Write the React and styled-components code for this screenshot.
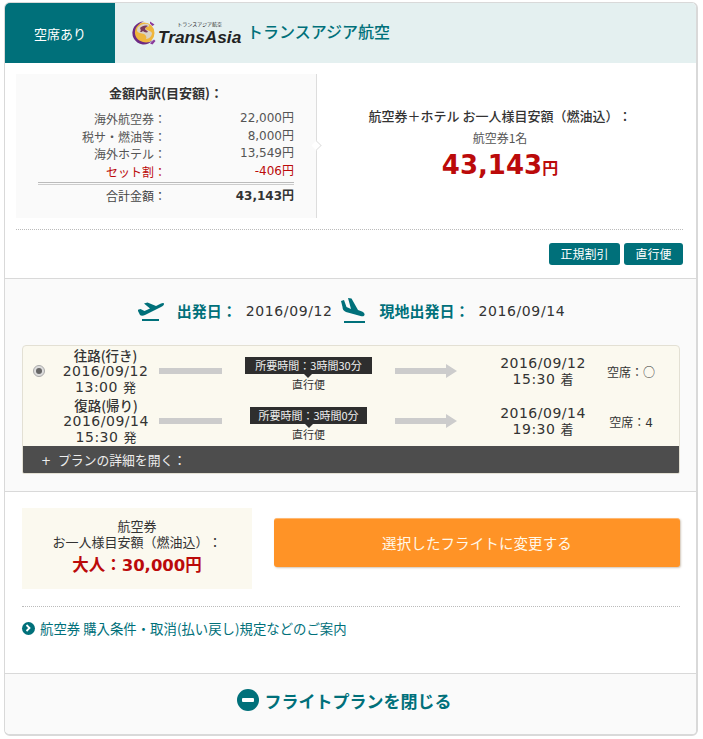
import React from "react";
import styled, { createGlobalStyle } from "styled-components";

const Global = createGlobalStyle`
  html, body { margin: 0; padding: 0; background: #fff; }
  body { font-family: "DejaVu Sans", "Noto Sans CJK JP", sans-serif; color: #333; font-size: 12px; text-spacing-trim: space-all; }
`;
const JP = `"Noto Sans CJK JP", "DejaVu Sans", sans-serif`;
const TEAL = "#00707a";
const RED = "#bb0a0a";

const Page = styled.div`
  width: 703px; height: 739px; padding: 2px 5px 0 4px; box-sizing: border-box; overflow: hidden;
`;
const Card = styled.div`
  width: 694px; height: 734px; box-sizing: border-box; border: 1px solid #d9d9d9; border-width: 1px 2px 2px 1px;
  border-radius: 6px; background: #fff; display: flex; flex-direction: column; overflow: hidden;
`;
const Header = styled.div`
  height: 60px; flex: none; display: flex; align-items: center; background: #e4f0f0;
`;
const StatusTab = styled.div`
  width: 110px; align-self: stretch; background: ${TEAL}; color: #fff; font: 400 13px ${JP};
  display: flex; align-items: center; justify-content: center;
`;
const Logo = styled.div`
  display: flex; align-items: center; margin-left: 16px; width: 116px; flex: none;
`;
const LogoWords = styled.div`
  display: flex; flex-direction: column; align-items: center; margin-left: 1px;
`;
const LogoSmall = styled.span`
  font: 400 5px/8px ${JP}; color: #222; margin-bottom: -1px;
`;
const LogoName = styled.span`
  font: italic 700 17.300px/20px "Liberation Sans", sans-serif; color: #222;
`;
const Airline = styled.div`
  font: 500 16px ${JP}; color: ${TEAL}; margin-top: -4px;
`;

const Summary = styled.div`
  flex: none; height: 215px; margin: 0 13px 0 11px; display: flex; flex-direction: column; padding-top: 11px; box-sizing: border-box;
`;
const SummaryTop = styled.div`
  display: flex; height: 144px; flex: none;
`;
const Breakdown = styled.div`
  width: 301px; box-sizing: border-box; background: #fafafa; border-right: 1px solid #ddd; position: relative;
  padding: 10px 22px 0 22px; color: #444;
  &::after {
    content: ""; position: absolute; right: -5px; top: 67px; width: 8px; height: 8px; background: #fff;
    border-top: 1px solid #ddd; border-right: 1px solid #ddd; transform: rotate(45deg) scale(.8,.8);
  }
`;
const BreakdownTitle = styled.div`
  font: 700 13px/18px ${JP}; color: #333; text-align: center; margin-bottom: 8px;
`;
const BreakRow = styled.div`
  display: flex; justify-content: flex-end; font: 400 12px/17.500px ${JP}; color: ${p => (p.$red ? RED : "#555")};
  & > span:first-child { width: 128px; text-align: right; white-space: nowrap; }
  & > span:last-child { width: 128px; text-align: right; font-family: "DejaVu Sans", "Noto Sans CJK JP", sans-serif; font-size: 12px; }
`;
const DoubleRule = styled.div`
  height: 1px; border-top: 1px solid #bbb; border-bottom: 1px solid #ccc; margin: 2px 0 1px 0;
`;
const TotalRow = styled(BreakRow)`
  color: #444; line-height: 20px;
  & > span:last-child { font-weight: 700; color: #333; }
`;
const Total = styled.div`
  flex: 1; display: flex; flex-direction: column; align-items: center; padding-top: 33px; box-sizing: border-box;
`;
const TotalTitle = styled.div`
  font: 500 13px/18px ${JP}; color: #333; white-space: nowrap;
`;
const TotalSub = styled.div`
  font: 400 12px/18px ${JP}; color: #555; margin-top: 4px;
`;
const TotalPrice = styled.div`
  font: 700 26px/32px "DejaVu Sans", sans-serif; color: ${RED}; margin-top: 2px;
  & > small { font: 700 16px ${JP}; }
`;
const Dotted = styled.div`
  border-top: 1px dotted #bbb; flex: none;
`;
const SummaryDotted = styled(Dotted)`
  margin-top: 11px;
`;
const Tags = styled.div`
  display: flex; justify-content: flex-end; gap: 4px; margin-top: 13px;
`;
const Tag = styled.span`
  height: 22px; padding: 0 11.500px; background: ${TEAL}; color: #fff; border-radius: 3px; font: 400 12px/22px ${JP};
  box-sizing: border-box;
`;

const Schedule = styled.div`
  flex: none; height: 214px; box-sizing: border-box; background: #fafafa; border-top: 1px solid #d9d9d9; border-bottom: 1px solid #d9d9d9;
  padding: 0 17px;
`;
const Dates = styled.div`
  height: 63px; margin-bottom: 3px; display: flex; align-items: center; justify-content: center; padding-left: 2px;
`;
const DateIcon = styled.svg`
  flex: none; margin-right: ${p => p.$mr}px;
`;
const DateLabel = styled.span`
  font: 700 15px ${JP}; color: ${TEAL}; margin-right: 9px; white-space: nowrap;
`;
const DateValue = styled.span`
  font: 400 14px "DejaVu Sans", sans-serif; letter-spacing: 0.600px; color: #333; margin-right: ${p => p.$mr || 0}px;
`;
const FlightBox = styled.div`
  border: 1px solid #e3e0d4; border-radius: 4px 4px 2px 2px; background: #fbf9ef; overflow: hidden; width: 658px; box-sizing: border-box;
`;
const FlightRow = styled.div`
  display: grid; height: 50px; grid-template-columns: 31px 103px 65px 173px 62px 139px 70px; align-items: center;
`;
const RadioCell = styled.div`
  display: flex; justify-content: center;
`;
const Radio = styled.span`
  width: 12px; height: 12px; border-radius: 50%; border: 1px solid #aaa; background: #ddd; box-sizing: border-box;
  display: flex; align-items: center; justify-content: center;
  &::after { content: ""; width: 6px; height: 6px; border-radius: 50%; background: #666; }
`;
const TimeCell = styled.div`
  text-align: center; font: 400 14px/16px "DejaVu Sans", "Noto Sans CJK JP", sans-serif; letter-spacing: 0.500px; color: #333; white-space: nowrap;
  padding-left: ${p => p.$pl || 0}px;
  & > b { display: block; font: 500 13.500px/16px ${JP}; letter-spacing: 0; }
  & > i { font: 400 13px/16px ${JP}; letter-spacing: 0; }
`;
const Bar = styled.div`
  height: 6px; width: 63px; background: #ccc; margin-left: 2px;
`;
const MidCell = styled.div`
  display: flex; flex-direction: column; align-items: center; margin-top: 7px;
`;
const DurationTag = styled.div`
  background: #2e2e2e; color: #eee; font: 400 11px/17px ${JP}; padding: 0 ${p => p.$pad}px; position: relative; white-space: nowrap;
  &::after {
    content: ""; position: absolute; left: 50%; bottom: -4px; margin-left: -4px; border: 4px solid transparent; border-bottom: 0; border-top-color: #2e2e2e;
  }
`;
const Direct = styled.div`
  font: 400 11px/18px ${JP}; color: #333; margin-top: 1px;
`;
const Arrow = styled.svg`
  display: block;
`;
const Seat = styled.div`
  text-align: center; font: 400 12px ${JP}; color: #333;
`;
const SeatMark = styled.span`
  font-family: ${p => (p.$latin ? `"DejaVu Sans", sans-serif` : JP)};
`;
const DetailBar = styled.div`
  height: 27px; background: #4d4d4d; color: #eee; font: 400 12.800px/27px ${JP}; padding-left: 18px;
  & > span { margin-right: 7px; font-family: "DejaVu Sans", sans-serif; font-size: 12px; }
`;

const Purchase = styled.div`
  flex: 1; padding: 16px 17px 0; display: flex; flex-direction: column;
`;
const PurchaseTop = styled.div`
  display: flex; align-items: flex-start; height: 81px; flex: none;
`;
const FareBox = styled.div`
  width: 230px; height: 81px; background: #fbf9ef; text-align: center; box-sizing: border-box; padding-top: 10px;
  font: 400 13px/16px ${JP}; color: #333; flex: none;
`;
const FarePrice = styled.div`
  font: 700 16.500px/22px "DejaVu Sans", "Noto Sans CJK JP", sans-serif; color: ${RED}; margin-top: 5px;
`;
const ChangeButton = styled.button`
  flex: none; width: 406px; height: 49px; margin: 10px 0 0 22px; border: 0; border-radius: 3px; background: #ff9326; color: #fff8ea;
  border-top: 1px solid #ffb871; box-shadow: 1px 1px 2px rgba(120,90,50,.35); font: 400 14.500px ${JP}; padding: 0 0 2px; letter-spacing: 0.100px;
`;
const PurchaseDotted = styled(Dotted)`
  margin-top: 17px; width: 658px;
`;
const InfoLink = styled.div`
  display: flex; align-items: center; gap: 5px; color: ${TEAL}; font: 400 13.400px/18px ${JP}; margin-top: 12px; white-space: nowrap;
`;
const LinkDot = styled.span`
  width: 13px; height: 13px; border-radius: 50%; background: ${TEAL}; display: flex; align-items: center; justify-content: center; flex: none;
`;
const Close = styled.div`
  flex: none; height: 61px; background: #fafafa; border-top: 1px solid #d9d9d9; display: flex; align-items: center; justify-content: center; gap: 6px;
  font: 700 17px ${JP}; color: ${TEAL}; padding-bottom: 8px; box-sizing: border-box; padding-right: 13px;
`;
const MinusDot = styled.span`
  width: 22px; height: 22px; border-radius: 50%; background: ${TEAL}; display: flex; align-items: center; justify-content: center;
  &::after { content: ""; width: 12px; height: 4px; background: #fff; border-radius: 1px; }
`;

const Emblem = () => (
  <svg width="26" height="28" viewBox="0 0 26 28">
    <circle cx="13" cy="14" r="10.500" fill="#efb63c" />
    <path d="M7 8c3-3 7-4 10-3 2 1 1 3-1 3-2 0-2 2 0 3s4 1 5 3c0 3-3 6-6 6 1-2 0-4-2-5-3-1-6-1-7-3 0-1 0-3 1-4z" fill="#d9d2c4" />
    <path d="M13 2.500A11.500 11.500 0 1 0 22 21c-3 2.500-7 3-10 2C6 21.500 3.500 17 4 12.500 4.500 8 8 4 13 2.500z" fill="#6d2a83" />
    <path d="M9 9c2-2 5-3 8-2-2 1-3 2-3 3s2 1 3 3c-2 1-4 0-5-1-1 1-2 1-3 1 1-1 1-2 0-4z" fill="#7a3a5a" />
    <path d="M19 2.500l4.500 3-2 1.500-2.500-2.500zM19 24.500l4-4 1.500 1.500-3 3.500z" fill="#8a3a9c" />
  </svg>
);

const TakeOff = () => (
  <DateIcon $mr={13} width="26" height="24" viewBox="4 3 26 24">
    <path d="M3.500 14L6.500 13 10.500 15 16 12.500 10 7.500 13.500 6.500 22 10 27 7.500C29 6.500 30 7 30 8 30 9 29 10 27 11L11 19C9 20 7 20 6 19z" fill={TEAL} />
    <rect x="8" y="23" width="17" height="2" fill={TEAL} />
  </DateIcon>
);
const Landing = () => (
  <DateIcon $mr={15} width="24" height="27" viewBox="4 2 24 27">
    <path d="M4 6L7 5 9.500 12 14 14 11 3 14.500 3.500 21 15 25 16.500C27 17.500 28 19 27.500 20 27 21.500 25.500 21.500 23.500 21L9 17C6.500 16 5.500 14 5.500 12z" fill={TEAL} />
    <rect x="7" y="26" width="21" height="2" fill={TEAL} />
  </DateIcon>
);

const RowArrow = () => (
  <Arrow width="62" height="16" viewBox="0 0 62 16">
    <path d="M0 5h51V1l11 7-11 7v-4H0z" fill="#ccc" />
  </Arrow>
);

const flights = [
  { radio: true, label: "往路(行き)", dep: "2016/09/12", depT: "13:00", dur: "所要時間：3時間30分", pad: 10, arr: "2016/09/12", arrT: "15:30", seat: "○" },
  { label: "復路(帰り)", dep: "2016/09/14", depT: "15:30", dur: "所要時間：3時間0分", pad: 8, arr: "2016/09/14", arrT: "19:30", seat: "4", latin: true, shift: 1 },
];

export default function App() {
  return (
    <Page>
      <Global />
      <Card>
        <Header>
          <StatusTab>空席あり</StatusTab>
          <Logo>
            <Emblem />
            <LogoWords>
              <LogoSmall>トランスアジア航空</LogoSmall>
              <LogoName>TransAsia</LogoName>
            </LogoWords>
          </Logo>
          <Airline>トランスアジア航空</Airline>
        </Header>
        <Summary>
          <SummaryTop>
            <Breakdown>
              <BreakdownTitle>金額内訳(目安額)：</BreakdownTitle>
              <BreakRow><span>海外航空券：</span><span>22,000円</span></BreakRow>
              <BreakRow><span>税サ・燃油等：</span><span>8,000円</span></BreakRow>
              <BreakRow><span>海外ホテル：</span><span>13,549円</span></BreakRow>
              <BreakRow $red><span>セット割：</span><span>-406円</span></BreakRow>
              <DoubleRule />
              <TotalRow><span>合計金額：</span><span>43,143円</span></TotalRow>
            </Breakdown>
            <Total>
              <TotalTitle>航空券＋ホテル お一人様目安額（燃油込）：</TotalTitle>
              <TotalSub>航空券1名</TotalSub>
              <TotalPrice>43,143<small>円</small></TotalPrice>
            </Total>
          </SummaryTop>
          <SummaryDotted />
          <Tags>
            <Tag>正規割引</Tag>
            <Tag>直行便</Tag>
          </Tags>
        </Summary>
        <Schedule>
          <Dates>
            <TakeOff />
            <DateLabel>出発日：</DateLabel>
            <DateValue $mr={8}>2016/09/12</DateValue>
            <Landing />
            <DateLabel>現地出発日：</DateLabel>
            <DateValue>2016/09/14</DateValue>
          </Dates>
          <FlightBox>
            {flights.map(f => (
              <FlightRow key={f.label}>
                <RadioCell>{f.radio && <Radio />}</RadioCell>
                <TimeCell $pl={f.shift}>
                  <b>{f.label}</b>
                  {f.dep}<br />{f.depT} <i>発</i>
                </TimeCell>
                <Bar />
                <MidCell>
                  <DurationTag $pad={f.pad}>{f.dur}</DurationTag>
                  <Direct>直行便</Direct>
                </MidCell>
                <RowArrow />
                <TimeCell $pl={33}>
                  {f.arr}<br />{f.arrT} <i>着</i>
                </TimeCell>
                <Seat>空席：<SeatMark $latin={f.latin}>{f.seat}</SeatMark></Seat>
              </FlightRow>
            ))}
            <DetailBar><span>+</span>プランの詳細を開く：</DetailBar>
          </FlightBox>
        </Schedule>
        <Purchase>
          <PurchaseTop>
            <FareBox>
              航空券<br />お一人様目安額（燃油込）：
              <FarePrice>大人：30,000円</FarePrice>
            </FareBox>
            <ChangeButton>選択したフライトに変更する</ChangeButton>
          </PurchaseTop>
          <PurchaseDotted />
          <InfoLink>
            <LinkDot>
              <svg width="7" height="8" viewBox="0 0 7 8"><path d="M1.500 1l3 3-3 3" fill="none" stroke="#fff" strokeWidth="1.800" /></svg>
            </LinkDot>
            航空券 購入条件・取消(払い戻し)規定などのご案内
          </InfoLink>
        </Purchase>
        <Close>
          <MinusDot />
          フライトプランを閉じる
        </Close>
      </Card>
    </Page>
  );
}
